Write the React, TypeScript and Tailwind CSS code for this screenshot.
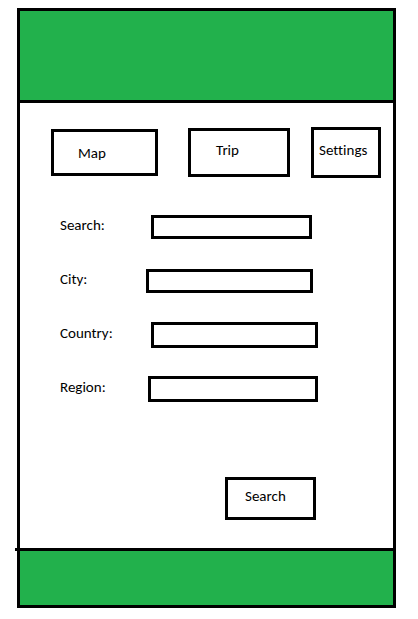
const tabs = [
  { label: "Map", box: "grow-[107] basis-[107px] h-[47px] pl-6 pt-px" },
  { label: "Trip", box: "grow-[102] basis-[102px] h-[49px] pl-[25px] pb-1.5 ml-[30px]" },
  { label: "Settings", box: "grow-[70] basis-[70px] h-[51px] pl-[5px] pb-1.5 ml-[21px]" },
];

const fields = [
  { id: "search", label: "Search:", labelBox: "w-[91px]", inputBox: "h-6 mr-1.5" },
  { id: "city", label: "City:", labelBox: "w-[86px]", inputBox: "h-6 mr-[5px]" },
  { id: "country", label: "Country:", labelBox: "w-[91px]", inputBox: "h-[26px]" },
  { id: "region", label: "Region:", labelBox: "w-[88px]", inputBox: "h-[26px]" },
];

export default function App() {
  return (
    <div className="flex min-h-screen flex-col bg-white pt-2 pr-[22px] pb-[11px] pl-[17px] font-['Carlito','Lato',sans-serif] text-[15px] leading-5 text-black [font-variant-ligatures:none]">
      <div className="flex flex-1 flex-col border-[3px] border-black">
        <header className="h-[92px] border-b-[3px] border-black bg-[#22b14c]" />
        <main className="flex flex-1 flex-col pt-6 pb-7">
          <nav className="flex items-center pr-3 pl-[31px]">
            {tabs.map((tab) => (
              <button
                key={tab.label}
                type="button"
                className={`flex min-w-0 items-center border-[3px] border-black ${tab.box}`}
              >
                {tab.label}
              </button>
            ))}
          </nav>
          <form
            className="mt-9 flex flex-col gap-7 pr-[75px] pl-10"
            onSubmit={(event) => event.preventDefault()}
          >
            {fields.map((field) => (
              <div key={field.id} className="flex h-[26px] items-center">
                <label htmlFor={field.id} className={`shrink-0 pb-1 ${field.labelBox}`}>
                  {field.label}
                </label>
                <input
                  id={field.id}
                  type="text"
                  className={`min-w-0 flex-1 border-[3px] border-black px-1 outline-none ${field.inputBox}`}
                />
              </div>
            ))}
            <button
              type="submit"
              className="mt-[47px] mr-0.5 flex h-[43px] w-[91px] items-center self-end border-[3px] border-black pb-1.5 pl-[17px]"
            >
              Search
            </button>
          </form>
        </main>
        <hr className="-ml-[5px] border-t-[3px] border-black" />
        <footer className="h-[54px] bg-[#22b14c]" />
      </div>
    </div>
  );
}
